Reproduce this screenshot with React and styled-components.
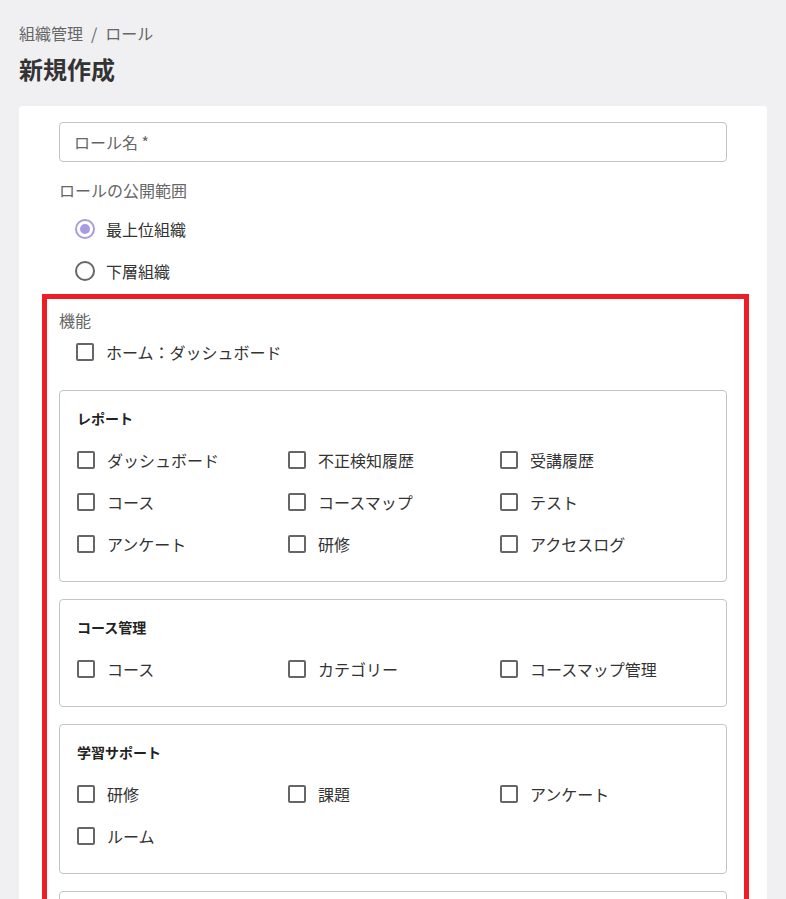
import React from "react";
import styled, { createGlobalStyle } from "styled-components";

const GlobalStyle = createGlobalStyle`
  html, body {
    margin: 0;
    padding: 0;
    background: #f0f0f3;
  }
  body {
    font-family: "Noto Sans CJK JP", "Noto Sans", sans-serif;
    color: #333;
  }
`;

const Page = styled.div`
  padding: 20px 19px 0;
`;

const Breadcrumb = styled.div`
  display: flex;
  align-items: center;
  gap: 8px;
  font-size: 16px;
  line-height: 26px;
  color: #666;
`;

const Title = styled.h1`
  margin: 5px 0 0;
  font-size: 24px;
  line-height: 36px;
  font-weight: 700;
  color: #333;
`;

const Card = styled.div`
  margin-top: 19px;
  background: #fff;
  border-radius: 4px;
  padding: 16px 40px 0;
`;

const TextField = styled.div`
  height: 40px;
  box-sizing: border-box;
  border: 1px solid #c4c4c4;
  border-radius: 4px;
  display: flex;
  align-items: center;
  padding: 0 14px;
  font-size: 16px;
  color: #666;
`;

const FieldLabel = styled.div`
  margin-top: ${(p) => p.$mt || 0}px;
  font-size: 16px;
  line-height: ${(p) => p.$lh || 24}px;
  color: #666;
`;

const RadioGroup = styled.div`
  margin-top: 6px;
`;

const OptionRow = styled.label`
  display: flex;
  align-items: center;
  height: 42px;
  padding-left: ${(p) => p.$indent ?? 17}px;
  gap: ${(p) => p.$gap ?? 12}px;
  font-size: 16px;
  color: #333;
`;

const RadioMark = styled.span`
  width: 20px;
  height: 20px;
  box-sizing: border-box;
  border-radius: 50%;
  border: 2px solid ${(p) => (p.$checked ? "#a89be0" : "#666")};
  display: flex;
  align-items: center;
  justify-content: center;
  flex-shrink: 0;
  &::after {
    content: "";
    display: ${(p) => (p.$checked ? "block" : "none")};
    width: 10px;
    height: 10px;
    border-radius: 50%;
    background: #a89be0;
  }
`;

const CheckMark = styled.span`
  width: 18px;
  height: 18px;
  box-sizing: border-box;
  border: 2px solid #666;
  border-radius: 2px;
  flex-shrink: 0;
`;

const Highlight = styled.section`
  border: 5px solid #ee1c25;
  margin: 2px -22px 0 -17px;
  padding: 10px 17px 0 12px;
`;

const GroupList = styled.div`
  display: flex;
  flex-direction: column;
  gap: 17px;
  margin-top: 17px;
`;

const Group = styled.div`
  border: 1px solid #c4c4c4;
  border-radius: 4px;
  padding: 15px 17px 16px;
`;

const GroupTitle = styled.div`
  font-size: 14px;
  line-height: 24px;
  font-weight: 700;
  color: #222;
  margin-bottom: 9px;
`;

const OptionGrid = styled.div`
  display: grid;
  grid-template-columns: 211px 212px 1fr;
`;

const Radio = ({ checked, children }) => (
  <OptionRow $indent={16} $gap={11}>
    <RadioMark $checked={checked} />
    {children}
  </OptionRow>
);

const Check = ({ children, indent }) => (
  <OptionRow $indent={indent}>
    <CheckMark />
    {children}
  </OptionRow>
);

const groups = [
  {
    title: "レポート",
    items: ["ダッシュボード", "不正検知履歴", "受講履歴", "コース", "コースマップ", "テスト", "アンケート", "研修", "アクセスログ"],
  },
  { title: "コース管理", items: ["コース", "カテゴリー", "コースマップ管理"] },
  { title: "学習サポート", items: ["研修", "課題", "アンケート", "ルーム"] },
  { title: "ユーザー管理", items: ["ユーザー", "グループ", "組織"] },
];

export default function App() {
  return (
    <>
      <GlobalStyle />
      <Page>
        <Breadcrumb>
          <span>組織管理</span>
          <span>/</span>
          <span>ロール</span>
        </Breadcrumb>
        <Title>新規作成</Title>
        <Card>
          <TextField>ロール名 *</TextField>
          <FieldLabel $mt={16}>ロールの公開範囲</FieldLabel>
          <RadioGroup>
            <Radio checked>最上位組織</Radio>
            <Radio>下層組織</Radio>
          </RadioGroup>
          <Highlight>
            <FieldLabel $lh={22}>機能</FieldLabel>
            <Check>ホーム：ダッシュボード</Check>
            <GroupList>
              {groups.map((g) => (
                <Group key={g.title}>
                  <GroupTitle>{g.title}</GroupTitle>
                  <OptionGrid>
                    {g.items.map((it) => (
                      <Check key={it} indent={0}>
                        {it}
                      </Check>
                    ))}
                  </OptionGrid>
                </Group>
              ))}
            </GroupList>
          </Highlight>
        </Card>
      </Page>
    </>
  );
}
